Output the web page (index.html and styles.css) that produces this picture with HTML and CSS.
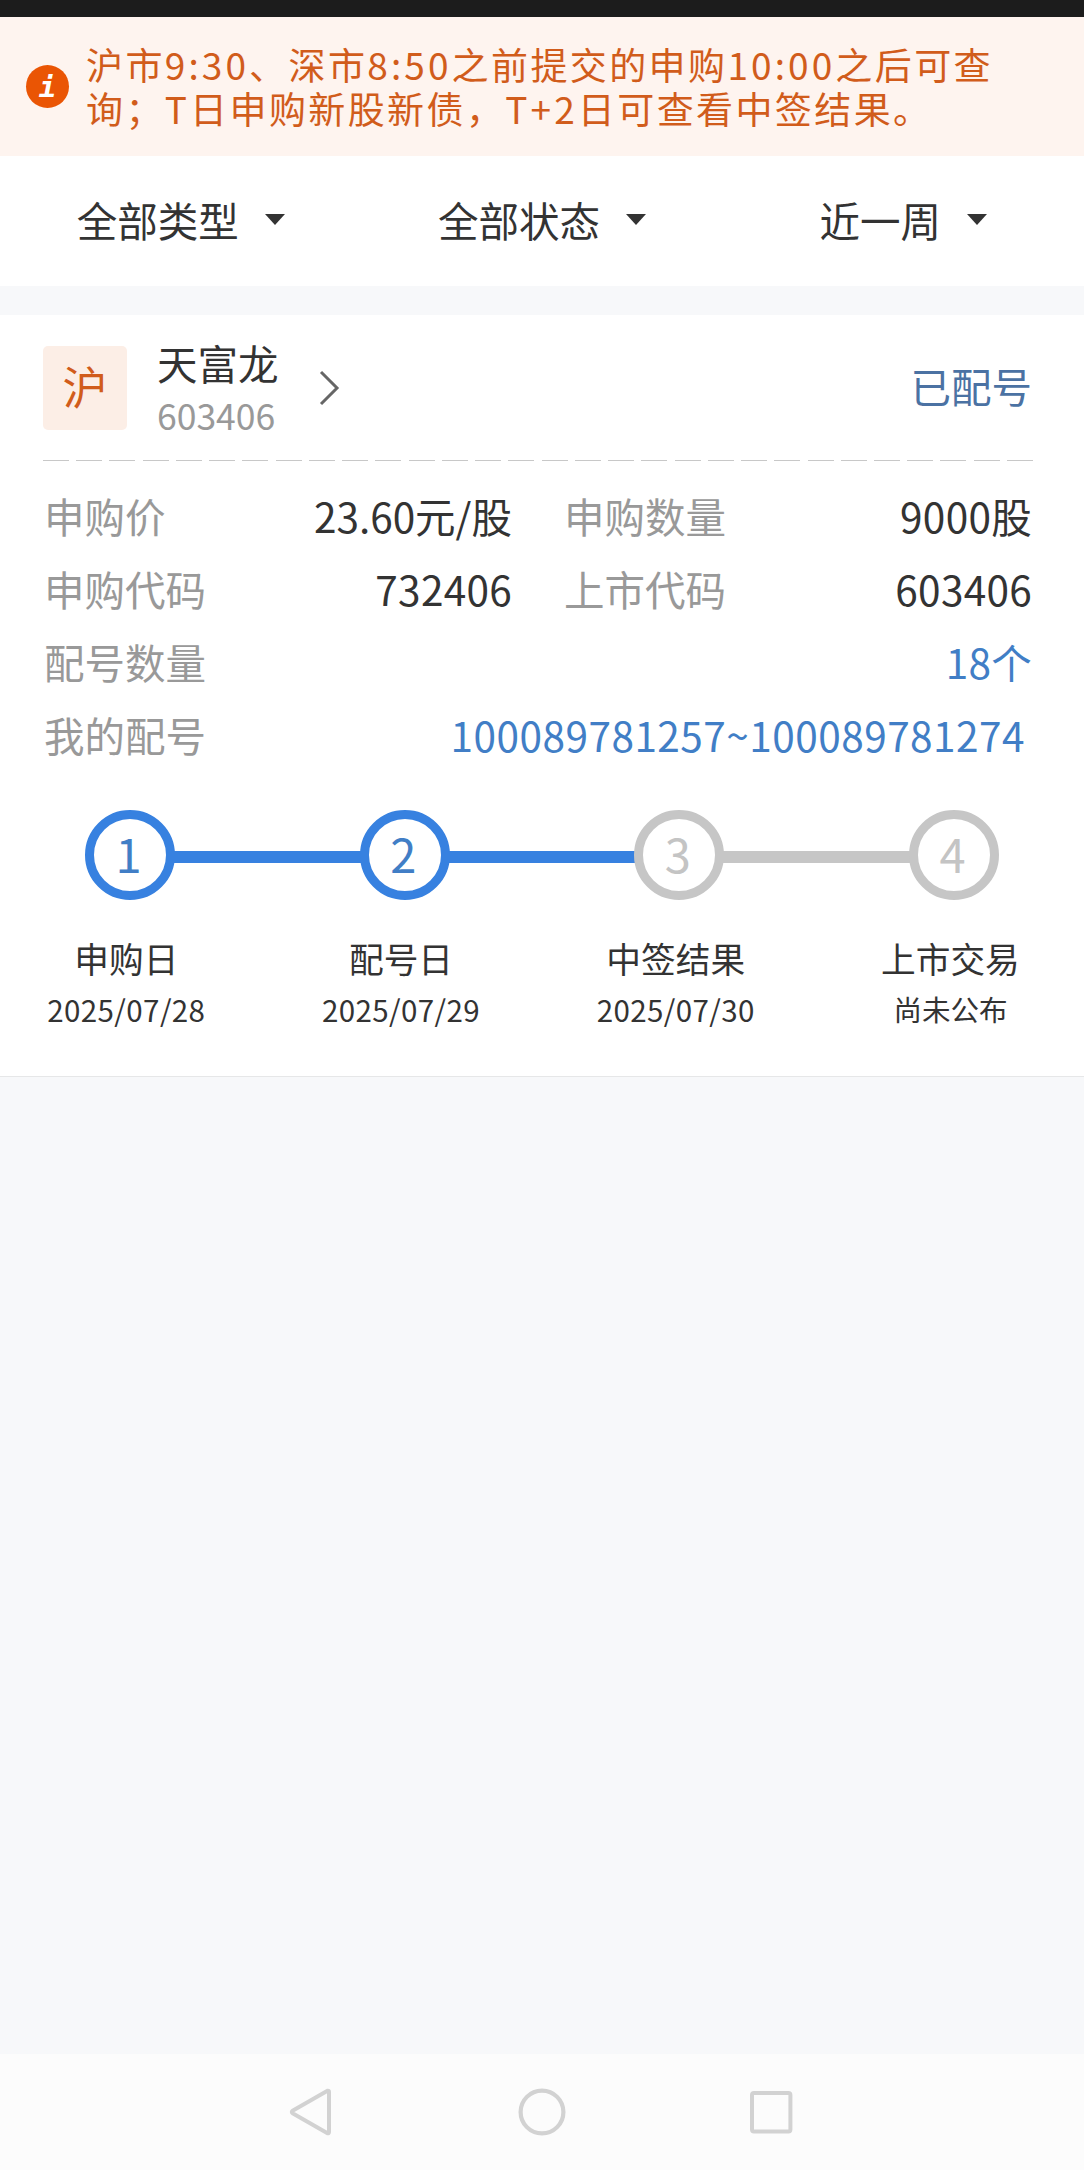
FILE: index.html
```html
<!DOCTYPE html>
<html lang="zh-CN">
<head>
  <meta charset="UTF-8" />
  <meta name="viewport" content="width=device-width, initial-scale=1.0"/>
  <title>申购查询</title>
  <link rel="stylesheet" href="styles.css">
</head>
<body>

<div class="status-bar"></div>

<div class="notice">
  <div class="notice-icon">i</div>
  <div class="notice-text">沪市<span class="num">9:30</span>、深市<span class="num">8:50</span>之前提交的申购<span class="num">10:00</span>之后可查<br>询；<span class="num">T</span>日申购新股新债，<span class="num">T+2</span>日可查看中签结果。</div>
</div>

<div class="filters">
  <div class="filter">全部类型<span class="caret"></span></div>
  <div class="filter">全部状态<span class="caret"></span></div>
  <div class="filter">近一周<span class="caret"></span></div>
</div>

<div class="card">
  <div class="card-header">
    <div class="market">沪</div>
    <div class="stock">
      <div class="stock-name">天富龙</div>
      <div class="stock-code">603406</div>
    </div>
    <svg class="chevron" width="22" height="36" viewBox="0 0 22 36">
      <path d="M2 2 L18 18 L2 34" fill="none" stroke="#666" stroke-width="3"/>
    </svg>
    <div class="state">已配号</div>
  </div>

  <div class="divider"></div>

  <div class="details">
    <div class="row"><span class="label">申购价</span><span class="value price">23.60元/股</span></div>
    <div class="row"><span class="label">申购数量</span><span class="value">9000股</span></div>
    <div class="row"><span class="label">申购代码</span><span class="value">732406</span></div>
    <div class="row"><span class="label">上市代码</span><span class="value">603406</span></div>
    <div class="row wide"><span class="label">配号数量</span><span class="value link">18个</span></div>
    <div class="row wide"><span class="label">我的配号</span><span class="value link range">100089781257~100089781274</span></div>
  </div>

  <div class="steps">
    <div class="circle done">1</div>
    <div class="line done"></div>
    <div class="circle done">2</div>
    <div class="line done"></div>
    <div class="circle">3</div>
    <div class="line"></div>
    <div class="circle">4</div>
  </div>

  <div class="step-labels">
    <div class="step">
      <div class="step-name">申购日</div>
      <div class="step-date">2025/07/28</div>
    </div>
    <div class="step">
      <div class="step-name">配号日</div>
      <div class="step-date">2025/07/29</div>
    </div>
    <div class="step">
      <div class="step-name">中签结果</div>
      <div class="step-date">2025/07/30</div>
    </div>
    <div class="step">
      <div class="step-name">上市交易</div>
      <div class="step-date pending">尚未公布</div>
    </div>
  </div>
</div>

<div class="nav-bar">
  <svg width="48" height="50" viewBox="0 0 48 50">
    <path d="M38.5 3.8 L4 23.4 Q1.6 25 4 26.6 L38.5 46.2 Q40 46.6 40 45 L40 5 Q40 3.4 38.5 3.8 Z" fill="none" stroke="#d2d2d2" stroke-width="4" stroke-linejoin="round"/>
  </svg>
  <svg width="48" height="50" viewBox="0 0 48 50">
    <circle cx="24" cy="25" r="21.4" fill="none" stroke="#d2d2d2" stroke-width="4.2"/>
  </svg>
  <svg width="48" height="50" viewBox="0 0 48 50">
    <rect x="5" y="6" width="38.4" height="38.4" rx="2" fill="none" stroke="#d2d2d2" stroke-width="4"/>
  </svg>
</div>

</body>
</html>
```
FILE: styles.css
```css
:root {
  --blue: #3781e0;
  --link: #417ec6;
  --orange: #ea5504;
  --text: #333;
  --muted: #999;
  --line: #c6c6c6;
  --bg: #f7f8fa;
}

* {
  box-sizing: border-box;
}

body {
  margin: 0;
  min-height: 2170px;
  display: flex;
  flex-direction: column;
  font-family: 'Noto Sans CJK SC', sans-serif;
  font-size: 40.5px;
  color: var(--text);
  background: var(--bg);
}

.status-bar {
  height: 17px;
  background: #1c1c1c;
}

.notice {
  display: flex;
  height: 139px;
  padding: 25px 0 0 26px;
  background: #fef4ef;
}

.notice-icon {
  width: 43px;
  height: 43px;
  margin-top: 23px;
  border-radius: 50%;
  background: var(--orange);
  color: #fff;
  font: italic bold 29px/44px 'DejaVu Sans Mono', monospace;
  text-align: center;
}

.notice-text {
  margin-left: 17px;
  font-size: 37px;
  line-height: 44px;
  letter-spacing: 2.4px;
  color: #d15c1b;
  white-space: nowrap;
}

.notice-text .num {
  letter-spacing: 3.1px;
}

.filters {
  display: flex;
  height: 130px;
  margin-bottom: 29px;
  padding-bottom: 3px;
  background: #fff;
}

.filter {
  flex: 1;
  display: flex;
  align-items: center;
  justify-content: center;
  gap: 26px;
}

.caret {
  border: 10px solid transparent;
  border-top: 11px solid var(--text);
  border-bottom: 0;
}

.card {
  height: 762px;
  padding: 24px 52px 0 43px;
  background: #fff;
  border-bottom: 1px solid #e6e7e8;
}

.card-header {
  display: flex;
  height: 107px;
  padding-top: 7px;
}

.market {
  width: 84px;
  height: 84px;
  border-radius: 5px;
  background: #fceee6;
  color: #d15c1b;
  font-size: 45px;
  line-height: 79px;
  text-align: center;
}

.stock {
  margin-left: 30px;
}

.stock-name {
  height: 44px;
  line-height: 34px;
}

.stock-code {
  font-size: 35.5px;
  line-height: 50px;
  color: var(--muted);
}

.chevron {
  margin: 24px 0 0 40px;
}

.state {
  margin-left: auto;
  line-height: 80px;
  color: #4b72a3;
}

.divider {
  height: 1px;
  margin: 14px 0 0;
  width: 990px;
  background: repeating-linear-gradient(to right, #c8c8c8 0 26px, transparent 26px 33.24px);
}

.details {
  display: grid;
  grid-template-columns: 468px 468px;
  column-gap: 52px;
  grid-auto-rows: 73px;
  width: 989px;
  padding: 18px 0 0 1px;
}

.row {
  display: flex;
  justify-content: space-between;
  line-height: 73px;
}

.row.wide {
  grid-column: 1 / 3;
}

.label {
  color: var(--muted);
}

.value {
  letter-spacing: 0.3px;
}

.price {
  letter-spacing: 0;
}

.link {
  color: var(--link);
}

.range {
  padding-right: 7px;
  letter-spacing: 0.5px;
}

.steps {
  display: flex;
  align-items: center;
  width: 914px;
  margin: 39px 0 0 42px;
}

.circle {
  width: 90px;
  height: 90px;
  flex: none;
  padding-right: 3px;
  border: 9px solid var(--line);
  border-radius: 50%;
  color: #c4c4c4;
  font-size: 47px;
  line-height: 68px;
  text-align: center;
}

.circle.done {
  border-color: var(--blue);
  color: var(--link);
}

.line {
  flex: 1;
  height: 12px;
  margin: 3px -2px 0;
  background: var(--line);
}

.line.done {
  background: var(--blue);
}

.step-labels {
  display: grid;
  grid-template-columns: repeat(4, 274.7px);
  margin: 32px 0 0 -54px;
  text-align: center;
}

.step-name {
  font-size: 34.7px;
  line-height: 52px;
}

.step-date {
  font-size: 29.5px;
  line-height: 50px;
  letter-spacing: 0.4px;
}

.step-date.pending {
  font-size: 28.5px;
  letter-spacing: 0;
}

.nav-bar {
  display: flex;
  justify-content: center;
  gap: 181px;
  height: 116px;
  margin-top: auto;
  padding-top: 33px;
  background: #fcfcfc;
}
```
